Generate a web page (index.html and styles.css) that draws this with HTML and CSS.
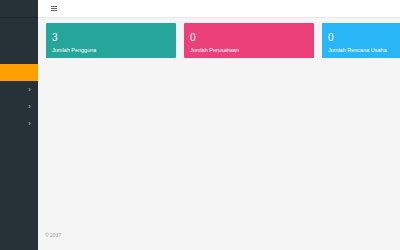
FILE: index.html
```html
<!DOCTYPE html>
<html lang="id">
<head>
    <meta charset="UTF-8">
    <title>Dashboard</title>
    <link rel="stylesheet" href="styles.css">
</head>
<body>
    <div class="halaman">
        <aside class="sidebar">
            <div class="sidebar-atas"></div>
            <ul class="menu">
                <li class="menu-kosong"></li>
                <li class="menu-kosong"></li>
                <li class="aktif"></li>
                <li><span class="panah">&#8250;</span></li>
                <li><span class="panah">&#8250;</span></li>
                <li><span class="panah">&#8250;</span></li>
            </ul>
        </aside>
        <div class="utama">
            <header class="header">
                <span class="hamburger"><i></i><i></i><i></i></span>
            </header>
            <div class="konten">
                <div class="kartu hijau">
                    <div class="angka">3</div>
                    <div class="label">Jumlah Pengguna</div>
                </div>
                <div class="kartu pink">
                    <div class="angka">0</div>
                    <div class="label">Jumlah Perusahaan</div>
                </div>
                <div class="kartu biru">
                    <div class="angka">0</div>
                    <div class="label">Jumlah Rencana Usaha</div>
                </div>
            </div>
            <footer class="footer">&copy; 2017</footer>
        </div>
    </div>
</body>
</html>
```
FILE: styles.css
```css
body {
    font-family: "Liberation Sans", Arial, sans-serif;
    margin: 0;
    background-color: #f5f5f5;
    overflow: hidden;
}
.halaman {
    display: flex;
    height: 250px;
}
.sidebar {
    width: 38px;
    flex-shrink: 0;
    background-color: #263238;
}
.sidebar-atas {
    height: 17px;
    border-bottom: 1px solid #1e282d;
}
.menu {
    list-style: none;
    margin: 0;
    padding: 0;
}
.menu li {
    height: 17px;
    display: flex;
    align-items: center;
    justify-content: flex-end;
    padding-right: 7px;
    color: #9aa7ad;
    font-size: 8px;
    font-weight: bold;
}
.menu li.menu-kosong {
    height: 23px;
}
.menu li.aktif {
    background-color: #ffa000;
    height: 17px;
}
.utama {
    flex: 1;
    display: flex;
    flex-direction: column;
    min-width: 0;
}
.header {
    height: 17px;
    background-color: white;
    border-bottom: 1px solid #e8e8e8;
    display: flex;
    align-items: center;
    padding-left: 13px;
}
.hamburger {
    display: flex;
    flex-direction: column;
    gap: 1px;
    width: 6px;
}
.hamburger i {
    display: block;
    height: 1px;
    background-color: #666;
}
.konten {
    flex: 1;
    display: flex;
    gap: 8px;
    padding: 5px 0 0 8px;
    overflow: hidden;
}
.kartu {
    width: 130px;
    height: 35px;
    flex-shrink: 0;
    box-sizing: border-box;
    padding: 10px 6px 0;
    color: white;
    border-radius: 1px;
}
.hijau {
    background-color: #26a69a;
}
.pink {
    background-color: #ec407a;
}
.biru {
    background-color: #29b6f6;
}
.angka {
    font-size: 10px;
    line-height: 10px;
}
.label {
    font-size: 5.5px;
    margin-top: 4px;
}
.footer {
    font-size: 5px;
    color: #999;
    padding: 0 0 12px 7px;
}
```
